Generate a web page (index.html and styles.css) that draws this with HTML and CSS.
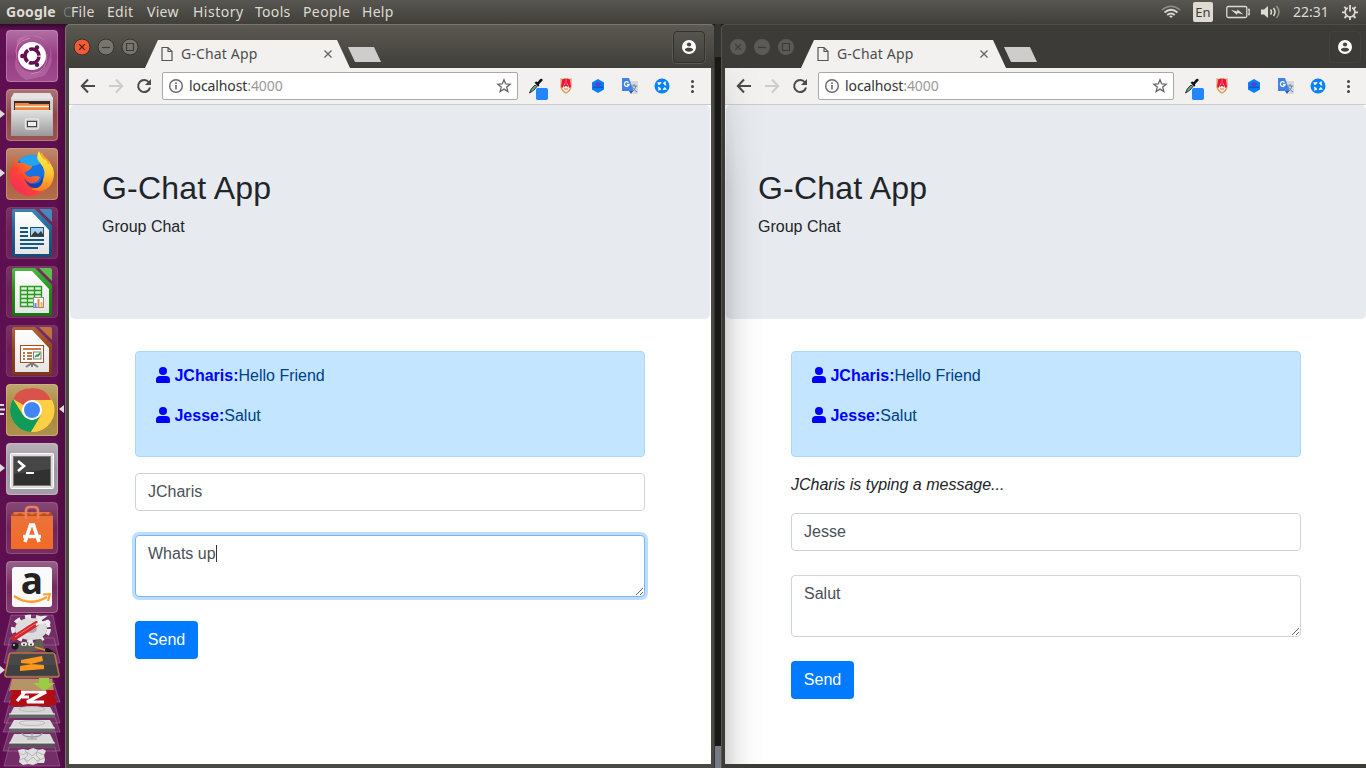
FILE: index.html
```html
<!DOCTYPE html>
<html lang="en">
<head>
<meta charset="utf-8">
<title>G-Chat App</title>
<link rel="stylesheet" href="styles.css">
</head>
<body>
<svg class="defs" width="0" height="0">
  <defs>
    <linearGradient id="gloss" x1="0" y1="0" x2="0" y2="1"><stop offset="0" stop-color="#fff" stop-opacity=".32"/><stop offset=".5" stop-color="#fff" stop-opacity=".08"/><stop offset="1" stop-color="#fff" stop-opacity=".16"/></linearGradient>
    <linearGradient id="metal" x1="0" y1="0" x2="0" y2="1"><stop offset="0" stop-color="#e2e2e2"/><stop offset="1" stop-color="#9a9a9a"/></linearGradient>
    <linearGradient id="orange" x1="0" y1="0" x2="0" y2="1"><stop offset="0" stop-color="#e8743c"/><stop offset="1" stop-color="#f36b25"/></linearGradient>
    <linearGradient id="fox" x1="0" y1="1" x2="1" y2="0"><stop offset="0" stop-color="#f0246f"/><stop offset=".35" stop-color="#ff4037"/><stop offset=".65" stop-color="#ff8a20"/><stop offset="1" stop-color="#ffc52e"/></linearGradient>
    <linearGradient id="tail" x1="0" y1="0" x2="0" y2="1"><stop offset="0" stop-color="#fff04a"/><stop offset=".55" stop-color="#ffc833"/><stop offset="1" stop-color="#ff7a26"/></linearGradient>
    <linearGradient id="paper" x1="0" y1="0" x2="0" y2="1"><stop offset="0" stop-color="#fff"/><stop offset="1" stop-color="#e4e4e4"/></linearGradient>
    <linearGradient id="writer" x1="0" y1="0" x2="0" y2="1"><stop offset="0" stop-color="#2577ab"/><stop offset="1" stop-color="#07426f"/></linearGradient>
    <linearGradient id="calc" x1="0" y1="0" x2="0" y2="1"><stop offset="0" stop-color="#3cae30"/><stop offset=".5" stop-color="#168b0d"/><stop offset="1" stop-color="#0c6b05"/></linearGradient>
    <linearGradient id="impress" x1="0" y1="0" x2="0" y2="1"><stop offset="0" stop-color="#a75023"/><stop offset="1" stop-color="#782b08"/></linearGradient>
    <symbol id="tile" viewBox="0 0 52 52"><rect x=".5" y=".5" width="51" height="51" rx="3.5" fill="url(#gloss)" stroke="#fff" stroke-opacity=".3"/></symbol>
    <symbol id="arrow" viewBox="0 0 6 8"><path d="M0 0 5 4 0 8z" fill="#ddd"/></symbol>
    <symbol id="back" viewBox="0 0 16 16"><path d="M15 8H2M8 1.500 1.800 8 8 14.500" fill="none" stroke="currentColor" stroke-width="2"/></symbol>
    <symbol id="fwd" viewBox="0 0 16 16"><path d="M1 8h13M8 1.500 14.200 8 8 14.500" fill="none" stroke="currentColor" stroke-width="2"/></symbol>
    <symbol id="reload" viewBox="0 0 16 16"><path d="M13 4.500A6 6 0 1 0 14 9.500" fill="none" stroke="currentColor" stroke-width="2"/><path d="M15 1v6H9z" fill="currentColor"/></symbol>
    <symbol id="info" viewBox="0 0 16 16"><circle cx="8" cy="8" r="6.300" fill="none" stroke="#666" stroke-width="1.400"/><path d="M8 7v4.500M8 4.300v1.600" stroke="#666" stroke-width="1.600"/></symbol>
    <symbol id="star" viewBox="0 0 16 16"><path d="m8 1.700 1.700 4.200 4.500.3-3.500 2.900 1.200 4.400L8 11.100l-3.900 2.400 1.200-4.400-3.500-2.900 4.500-.3z" fill="none" stroke="#666" stroke-width="1.300"/></symbol>
    <symbol id="file" viewBox="0 0 12 16"><path d="M1 1.500h6l4 4v9H1zM7 1.500v4h4" fill="none" stroke="#555" stroke-width="1.200"/></symbol>
    <symbol id="avatar" viewBox="0 0 14 14"><circle cx="7" cy="7" r="7" fill="#fff"/><circle cx="7" cy="4.500" r="2.100" fill="#45443f"/><path d="M2.800 9.800c.8-2.600 7.600-2.600 8.400 0-1.300 2.500-7.100 2.500-8.400 0z" fill="#45443f"/></symbol>
    <symbol id="ext" viewBox="0 0 152 24">
      <path d="M1.500 16q1-4.500 5.500-8l2 1.500q-3 4.500-7.500 6.500z" fill="#64a283" stroke="#2c3b35" stroke-width="1"/><path d="m6.500 5.500 2-1 1 .7L12 2.200q2-1 2.600.4.200 1.400-1.200 2.200L11 7.200l.3 1.300-1.200 1.200z" fill="#111"/>
      <rect x="8" y="11" width="12" height="12" rx="1.800" fill="#2486fc"/>
      <path d="M38 1.500q2.500 1.500 5 .5v8.500q-1 3.500-5 5.500-4-2-5-5.500V2q2.500 1 5-.5z" fill="#fbeee0" stroke="#dca257" stroke-width="1.200"/><path d="M34 2.500 37 1.500V6L34.500 11 33 10zM42 2.500 39 1.500V6l2.500 5 1.500-1z" fill="#f1123c"/><path d="M38 2v7M36 9.500l2-2 2 2" fill="none" stroke="#f1123c" stroke-width="1.600"/><path d="M36 12h4" stroke="#cf7d68"/>
      <path d="m70 2 6 3.400v7.200L70 16l-6-3.400V5.400z" fill="#087cff"/><path d="m66 7.500 4-2.500 4 2.500-4 2z" fill="#5b3fc4"/><path d="M65 10.300h10" stroke="#075db8" stroke-width="1.500"/>
      <path d="M102 4h8v13h-5z" fill="#d5d9dc"/><path d="M94 1h7l4.500 13H94z" fill="#3f83e8"/><path d="M103 9h6M106 7v2M108 9q-1 4-4 6M104 10q2 3 5 5" stroke="#67819b" fill="none"/><path d="M101 14h4l-2 3z" fill="#2856b5"/><path d="M100.500 5.500a2.300 2.300 0 1 0 .5 2h-2" stroke="#fff" stroke-width="1.300" fill="none"/>
      <circle cx="134" cy="9" r="7.500" fill="#0683fa"/><circle cx="134" cy="9" r="3.600" fill="none" stroke="#fff" stroke-width="1.700" stroke-dasharray="3.600 2.050" stroke-dashoffset="1.800" transform="rotate(45 134 9)"/><path d="m129.500 5.500 2.500 1.300M137.500 4.500l-1.300 2.500M138.500 12.500l-2.500-1.300M130.500 13.500l1.300-2.500" stroke="#fff" stroke-width="1.400"/>
    </symbol>
    <symbol id="user" viewBox="0 0 14 16"><circle cx="7" cy="4" r="4" fill="#00f"/><path d="M4 9h6a4 4 0 0 1 4 4v1.700a1.300 1.300 0 0 1-1.300 1.300H1.300A1.300 1.300 0 0 1 0 14.700V13a4 4 0 0 1 4-4z" fill="#00f"/></symbol>
  </defs>
</svg>

<header class="panel">
  <strong class="app-name">Google</strong><span class="app-fade">C</span>
  <nav class="menu"><span>File</span><span>Edit</span><span>View</span><span>History</span><span>Tools</span><span>People</span><span>Help</span></nav>
  <div class="indicators">
    <svg class="wifi" width="20" height="14" viewBox="0 0 20 14" fill="none" stroke="#dfdbd2"><path d="M.8 5Q10-2.500 19.200 5" stroke-opacity=".45" stroke-width="1.500"/><path d="M3.500 7.500Q10 2 16.500 7.500M6.200 10Q10 7 13.800 10" stroke-width="1.700"/><path d="m8 11 2 2 2-2q-2-1.200-4 0z" fill="#dfdbd2" stroke="none"/></svg>
    <span class="lang">En</span>
    <svg class="battery" width="24" height="14" viewBox="0 0 24 14" fill="none" stroke="#dfdbd2" stroke-width="1.300"><rect x=".8" y="1.500" width="20" height="11" rx="1.500"/><path d="M22 4.500h1.200v5H22"/><path d="m5 4.800 6 1.700.5-2 6 5-6-1.500-.5 2z" fill="#dfdbd2" stroke="none"/></svg>
    <svg class="volume" width="20" height="14" viewBox="0 0 20 14" fill="none" stroke="#dfdbd2" stroke-width="1.500"><path d="M0 4.500h3L7 1v12L3 9.500H0z" fill="#dfdbd2" stroke="none"/><path d="M9.500 4.500q2 2.500 0 5M12.500 3q3 4 0 8"/><path d="M15.500 1q5 6 0 12" stroke-opacity=".5"/></svg>
    <time class="clock">22:31</time>
    <svg class="gear" width="16" height="16" viewBox="0 0 16 16" fill="none" stroke="#dfdbd2"><path d="M5.800 3.700a4.900 4.900 0 1 0 4.400 0" stroke-width="1.700"/><path d="M8 1v6.500M2.300 2.800l2 2M13.700 2.800l-2 2M0 8.300h3M13 8.300h3M2.500 14l2-2M13.500 14l-2-2M8 13v3" stroke-width="1.800"/></svg>
  </div>
</header>

<main class="desktop">
  <ul class="launcher">
    <li><svg viewBox="0 0 64 59"><rect x="6" width="52" height="52" rx="4" fill="#8d2a78"/><path d="M17 26C14 8 34-2 47 12Q53 20 48 32 44 44 30 42 18 40 17 26zM17 26Q10 40 26 50L44 46Q58 30 47 12 30 0 17 10z" fill="#d58bc2" opacity=".3"/><path d="M17 28Q12 12 30 8M47 24q1 18-16 20" fill="none" stroke="#e0a5d2" opacity=".5"/><use href="#tile" x="6" width="52" height="52"/><circle cx="32" cy="26" r="14" fill="#fff"/><circle cx="32" cy="26" r="7" fill="none" stroke="#62104f" stroke-width="3.600" stroke-dasharray="13.300 1.360" stroke-dashoffset="-.7"/><circle cx="22.300" cy="26" r="2.200" fill="#62104f"/><circle cx="37" cy="17.500" r="2.200" fill="#62104f"/><circle cx="37" cy="34.700" r="2.200" fill="#62104f"/></svg></li>
    <li><svg viewBox="0 0 64 59"><rect x="6" width="52" height="52" rx="4" fill="#873434"/><use href="#tile" x="6" width="52" height="52"/><path d="M14 4h36l3 6v36H11V10z" fill="url(#metal)"/><path d="M11 10h42v-1L50 4H14l-3 5z" fill="#e4e4e4"/><path d="M14 12h36v10H14z" fill="#3c2924"/><path d="M15 14h13l2 1h19v6H15z" fill="#ed873f"/><path d="M15 17.500h34" stroke="#fdeedd" stroke-width="1.500"/><path d="M12 21h40l1 26H11z" fill="url(#metal)"/><rect x="25.500" y="30" width="13" height="10" rx="2" fill="#b5b5b5" stroke="#e6e6e6" stroke-width="1.500"/><rect x="27.500" y="32.500" width="9" height="5" fill="#eee" stroke="#444"/><use href="#arrow" y="21" width="6" height="8"/></svg></li>
    <li><svg viewBox="0 0 64 59"><rect x="6" width="52" height="52" rx="4" fill="#a4522a"/><use href="#tile" x="6" width="52" height="52"/><circle cx="32" cy="25" r="18" fill="#1673e4"/><path d="M19 12q9-8 19-4l2 8-14 4z" fill="#23a4ef"/><path d="M15 7q-1 4 3 8 6-1 9 2l5 1q-1 4-7 6 0 4 5 5 6-2 10 0-2 6-9 6 8 4 14-3 5-9-2-18-3-5-2-10l3 4 6 6q6 12 0 22-8 12-21 12Q13 46 10 31q-1-11 4-15-1-5 1-9z" fill="url(#fox)"/><path d="M39 3q-4 7 1 12 8 8 2 19-3 6-11 7 12 5 19-3 6-9 3-18-2-4-4-5l-1 2q0-3-3-6l-1 1q-3-3-5-9z" fill="url(#tail)"/><path d="M24 30q5 8 14 5 4-2 4-8 3 10-5 13-9 1-13-10z" fill="#1540b2"/><use href="#arrow" y="21" width="6" height="8"/></svg></li>
    <li><svg viewBox="0 0 64 59"><rect x="6" width="52" height="52" rx="4" fill="#681951"/><path d="M14 2h21l17 17v29q0 2-2 2H14q-2 0-2-2V4q0-2 2-2z" fill="url(#writer)"/><path d="M39 2h11q2 0 2 2v11z" fill="#2f7fb7"/><path d="M15 5h17l17 18v24H15z" fill="url(#paper)"/><path d="M20 21h8M20 25h8M20 29h8M20 33h24M20 37h24M20 41h18" stroke="#0b527f" stroke-width="1.900"/><rect x="30.500" y="20.500" width="13" height="9" fill="#9fd3ef" stroke="#174b74"/><path d="m31 29 4-5 3 3 3-3 3 5z" fill="#333"/><use href="#tile" x="6" width="52" height="52" opacity=".35"/></svg></li>
    <li><svg viewBox="0 0 64 59"><rect x="6" width="52" height="52" rx="4" fill="#681951"/><path d="M14 2h21l17 17v29q0 2-2 2H14q-2 0-2-2V4q0-2 2-2z" fill="url(#calc)"/><path d="M39 2h11q2 0 2 2v11z" fill="#4cb83f"/><path d="M15 5h17l17 18v24H15z" fill="url(#paper)"/><path d="M20.500 20.500h21V40.500h-21zM20 24.500h21M20 28.500h21M20 32.500h21M20 36.500h21M27.500 20v21M34.500 20v21" fill="#d9f3d3" stroke="#25941c" stroke-width="1.400"/><rect x="33.500" y="31.500" width="10" height="10" fill="#fff" stroke="#888"/><path d="M35.500 41v-4" stroke="#38f" stroke-width="2"/><path d="M38.500 41v-8" stroke="#e74" stroke-width="2"/><path d="M41.500 41v-5" stroke="#fa2" stroke-width="2"/><use href="#tile" x="6" width="52" height="52" opacity=".35"/></svg></li>
    <li><svg viewBox="0 0 64 59"><rect x="6" width="52" height="52" rx="4" fill="#681951"/><path d="M14 2h21l17 17v29q0 2-2 2H14q-2 0-2-2V4q0-2 2-2z" fill="url(#impress)"/><path d="M39 2h11q2 0 2 2v11z" fill="#b8652f"/><path d="M15 5h17l17 18v24H15z" fill="url(#paper)"/><rect x="20.500" y="20.500" width="23" height="17" fill="#fff" stroke="#a34413"/><path d="M23 24h18" stroke="#d6733d" stroke-width="2"/><path d="M23 28h2M23 31h2M23 34h2M27 28h5M27 31h5M27 34h5" stroke="#a34413" stroke-width="1.600"/><rect x="33.500" y="27" width="7.500" height="7" fill="#fff" stroke="#777"/><path d="m35 32 2-2 1 1 2-3" fill="none" stroke="#269326" stroke-width="1.500"/><path d="m26 42 6-4 6 4M32 38v4" fill="none" stroke="#777" stroke-width="2"/><use href="#tile" x="6" width="52" height="52" opacity=".35"/></svg></li>
    <li><svg viewBox="0 0 64 59"><rect x="6" width="52" height="52" rx="4" fill="#a17d2b"/><use href="#tile" x="6" width="52" height="52"/><circle cx="32" cy="26" r="22" fill="#ffcf43"/><path d="M32 26 13 15Q18 4 32 4t19 12z" fill="#d9534a"/><path d="M13 15A22 22 0 0 0 31 48l10-17q-9 9-18 0z" fill="#109b59"/><path d="M32 16h20a22 22 0 0 1-21 32l11-17z" fill="#ffcf43"/><circle cx="32" cy="26" r="10" fill="#fff"/><circle cx="32" cy="26" r="8" fill="#4285f4"/><path d="M0 21h4M0 25.500h5M0 30h4" stroke="#ddd" stroke-width="2"/><path d="m64 21-5 4 5 4z" fill="#ddd"/></svg></li>
    <li><svg viewBox="0 0 64 59"><rect x="6" width="52" height="52" rx="4" fill="#968b96"/><use href="#tile" x="6" width="52" height="52"/><rect x="10.500" y="10.500" width="43" height="35" rx="1" fill="#ddd" stroke="#fff"/><rect x="13.500" y="13.500" width="37" height="29" fill="#303130" stroke="#777"/><path d="M14 14h36v12L14 31z" fill="#fff" opacity=".1"/><path d="m18 18 6 5-6 5" fill="none" stroke="#fff" stroke-width="2.600"/><path d="M26 30h8" stroke="#fff" stroke-width="2"/><use href="#arrow" y="21" width="6" height="8"/></svg></li>
    <li><svg viewBox="0 0 64 59"><rect x="6" width="52" height="52" rx="4" fill="#681951"/><use href="#tile" x="6" width="52" height="52" opacity=".65"/><path d="m11 14 3-4h36l3 4v33H11z" fill="url(#orange)"/><path d="M11 14h42l-3-4-2 3-4-2-4 2-4-2-4 2-4-2-4 2-4-2-4 2-4-2z" fill="#b34d2a"/><path d="M26 17V9q0-4 4-4h4q4 0 4 4v8" fill="none" stroke="#ec8058" stroke-width="2.600"/><path d="m25 40 5.500-17h3L39 40" fill="none" stroke="#fff" stroke-width="3.600"/><path d="M23 34.500h18" stroke="#fff" stroke-width="3.500"/></svg></li>
    <li><svg viewBox="0 0 64 59"><rect x="6" width="52" height="52" rx="4" fill="#681951"/><use href="#tile" x="6" width="52" height="52"/><rect x="12" y="6" width="40" height="40" rx="3" fill="#fafafa"/><text class="amazon-a" x="32" y="33" text-anchor="middle">a</text><path d="M14 35q16 11 33 1" fill="none" stroke="#f9a12c" stroke-width="2.400"/><path d="m43 33.500 7-.5-2 7" fill="none" stroke="#f9a12c" stroke-width="2"/></svg></li>
    <li class="stack"><svg viewBox="0 614 64 154">
      <g fill="#8f5584" fill-opacity=".45" stroke="#b486aa" stroke-opacity=".55" stroke-width=".8"><path d="M11 615h42l6 30H4zM10 638h44l6 25H4zM12 678h40l8 24H4zM10 701h44l6 22H4zM9 717h46l5 15H3zM9 731h46l5 20H3zM9 747h46l5 19H4z"/></g>
      <ellipse cx="31" cy="629" rx="16" ry="11" fill="#dcdcdc"/><ellipse cx="31" cy="629" rx="18" ry="12.500" fill="none" stroke="#e8e8e8" stroke-width="4" stroke-dasharray="6 5"/><ellipse cx="31" cy="629" rx="6" ry="4" fill="#b4a4b0"/>
      <path d="M14 638 36 624" stroke="#d3262c" stroke-width="5.500" stroke-linecap="round"/><path d="M15 637 35 624" stroke="#f07575" stroke-width="1"/><path d="m36 625 6-4M47 626q4-3 1-5l-6 2-2-3 4-3q-6 0-5 5" stroke="#eee" stroke-width="2.500" fill="none"/>
      <path d="M17 648q1-7 9-6 6 2 10-1 5-5 7 1l1 7-14 3H16z" fill="#635f56"/><circle cx="15" cy="646" r="3.500" fill="#191b1d"/><circle cx="14" cy="645" r="1" fill="#ddd"/><ellipse cx="24" cy="644" rx="3" ry="2" fill="#eee"/><ellipse cx="31" cy="644" rx="3" ry="2" fill="#eee"/><circle cx="24" cy="644.500" r="1" fill="#222"/><circle cx="31" cy="644.500" r="1" fill="#222"/><path d="m35 647 13 4" stroke="#e98d28" stroke-width="1.800"/><path d="m47 650 7 4" stroke="#15181c" stroke-width="4" stroke-linecap="round"/>
      <path d="M11 653h42q1.500 0 2 2l4 20q0 2-2 2H7q-2 0-2-2l4-20q.5-2 2-2z" fill="#484848" stroke="#bd7647" stroke-width="1.600"/><path d="M8 665h48l3 10H5z" fill="#222" opacity=".2"/><path d="m21 660 21-4 1 5-12 3 13 1v4l-24 2v-5l12-2-11-1z" fill="#ff971d"/><use href="#arrow" y="666" width="6" height="8"/>
      <path d="M12 679h40l2 12H9z" fill="#b59565"/><path d="M10 690h44l2 4-2 3 3 3-2 6-4-1-3 2-4-2-4 2-4-2-4 2-4-2-4 2-4-2-4 2-4-2-4 1 3-5-1-4 3-3z" fill="#b20c14"/><path d="M21 692h13M25 692l-8 9M22 697h7M33 692h13L27 702h17" fill="none" stroke="#fff" stroke-width="3.200"/><path d="M39 678h10v5h6l-11 8-11-8h6z" fill="#9ccc45"/>
      <path d="M14 707h36l5 9H9z" fill="#d5d5d5"/><path d="M9 714h46v4H9z" fill="#666"/><path d="M9 714h46" stroke="#eee"/><ellipse cx="32" cy="709" rx="13" ry="2.500" fill="none" stroke="#bbb"/><path d="M14 720h36l5 9H9z" fill="#ddd"/><path d="M9 728h46v4H9z" fill="#666"/><path d="M9 728h46" stroke="#eee"/><ellipse cx="32" cy="723" rx="13" ry="2.500" fill="none" stroke="#bbb"/><path d="M14 734h36l5 10H9z" fill="#d9d9d9"/><path d="M9 743h46v4H9z" fill="#555"/><path d="M9 743h46" stroke="#eee"/><path d="M32 733v6M22 733q1 4 10 4t10-4M27 739h10" fill="none" stroke="#999" stroke-width="1.200"/>
      <path d="m18 750 5-1 5 1 5-2 5 2 5-1 3 2-2 4 1 5-1 3-6 0-5 2-5-1-5 1-4-3 1-5z" fill="#e0e0e0"/><path d="m19 753 4 2 4-3 5 4 5-4 7 3M20 760l4-2 4 3 5-4 4 4 7-3M25 750l3 5-4 4 4 4M38 749l-2 6 4 4-4 5" fill="none" stroke="#b5b5b5"/>
    </svg></li>
  </ul>

  <section class="window">
    <div class="titlebar">
      <div class="controls">
        <svg width="20" height="20" viewBox="0 0 20 20"><circle cx="10" cy="10" r="8" fill="#f35b32" stroke="#33322e"/><path d="m7.200 7.200 5.600 5.600m0-5.600-5.600 5.600" stroke="#4a2015" stroke-width="1.200"/></svg>
        <svg width="20" height="20" viewBox="0 0 20 20"><circle cx="10" cy="10" r="8" fill="#777570" stroke="#33322e"/><path d="M6 10.500h8" stroke="#3c3b37" stroke-width="1.200"/></svg>
        <svg width="20" height="20" viewBox="0 0 20 20"><circle cx="10" cy="10" r="8" fill="#777570" stroke="#33322e"/><path d="M6.500 6.500h7v7h-7z" fill="none" stroke="#3c3b37" stroke-width="1.200"/></svg>
      </div>
      <div class="tab"><svg width="12" height="16"><use href="#file"/></svg><span>G-Chat App</span><svg class="close" width="8" height="8" viewBox="0 0 8 8"><path d="m.5.5 7 7m0-7-7 7" stroke="#666" stroke-width="1.400"/></svg></div>
      <div class="newtab"></div>
      <div class="profile"><svg width="14" height="14"><use href="#avatar"/></svg></div>
    </div>
    <div class="view">
      <div class="toolbar">
        <svg class="nav" width="16" height="16"><use href="#back"/></svg><svg class="nav dim" width="16" height="16"><use href="#fwd"/></svg><svg class="nav" width="16" height="16"><use href="#reload"/></svg>
        <div class="address"><svg width="16" height="16"><use href="#info"/></svg><span class="host">localhost</span><span class="port">:4000</span><svg class="star" width="16" height="16"><use href="#star"/></svg></div>
        <svg class="ext" width="152" height="24"><use href="#ext"/></svg>
        <div class="dots"><i></i><i></i><i></i></div>
      </div>
      <div class="page">
        <div class="jumbotron"><h1>G-Chat App</h1><p>Group Chat</p></div>
        <div class="container">
          <div class="messages"><p><svg width="14" height="16"><use href="#user"/></svg> <strong>JCharis:</strong>Hello Friend</p><p><svg width="14" height="16"><use href="#user"/></svg> <strong>Jesse:</strong>Salut</p></div>
          <input class="field" type="text" value="JCharis">
          <div class="editor"><textarea class="field focused" rows="2">Whats up</textarea><span class="caret"></span></div>
          <button class="send">Send</button>
        </div>
      </div>
    </div>
  </section>

  <div class="gap"></div>

  <section class="window inactive">
    <div class="titlebar">
      <div class="controls">
        <svg width="20" height="20" viewBox="0 0 20 20"><circle cx="10" cy="10" r="8" fill="#5c5a56"/><path d="m7.200 7.200 5.600 5.600m0-5.600-5.600 5.600" stroke="#3c3b37" stroke-width="1.200"/></svg>
        <svg width="20" height="20" viewBox="0 0 20 20"><circle cx="10" cy="10" r="8" fill="#5c5a56"/><path d="M6 10.500h8" stroke="#3c3b37" stroke-width="1.200"/></svg>
        <svg width="20" height="20" viewBox="0 0 20 20"><circle cx="10" cy="10" r="8" fill="#5c5a56"/><path d="M6.500 6.500h7v7h-7z" fill="none" stroke="#3c3b37" stroke-width="1.200"/></svg>
      </div>
      <div class="tab"><svg width="12" height="16"><use href="#file"/></svg><span>G-Chat App</span><svg class="close" width="8" height="8" viewBox="0 0 8 8"><path d="m.5.5 7 7m0-7-7 7" stroke="#666" stroke-width="1.400"/></svg></div>
      <div class="newtab"></div>
      <div class="profile"><svg width="14" height="14"><use href="#avatar"/></svg></div>
    </div>
    <div class="view">
      <div class="toolbar">
        <svg class="nav" width="16" height="16"><use href="#back"/></svg><svg class="nav dim" width="16" height="16"><use href="#fwd"/></svg><svg class="nav" width="16" height="16"><use href="#reload"/></svg>
        <div class="address"><svg width="16" height="16"><use href="#info"/></svg><span class="host">localhost</span><span class="port">:4000</span><svg class="star" width="16" height="16"><use href="#star"/></svg></div>
        <svg class="ext" width="152" height="24"><use href="#ext"/></svg>
        <div class="dots"><i></i><i></i><i></i></div>
      </div>
      <div class="page">
        <div class="jumbotron"><h1>G-Chat App</h1><p>Group Chat</p></div>
        <div class="container">
          <div class="messages"><p><svg width="14" height="16"><use href="#user"/></svg> <strong>JCharis:</strong>Hello Friend</p><p><svg width="14" height="16"><use href="#user"/></svg> <strong>Jesse:</strong>Salut</p></div>
          <p class="feedback"><em>JCharis is typing a message...</em></p>
          <input class="field" type="text" value="Jesse">
          <div class="editor"><textarea class="field" rows="2">Salut</textarea></div>
          <button class="send">Send</button>
        </div>
      </div>
    </div>
  </section>
</main>
</body>
</html>
```

FILE: styles.css
```css
* { box-sizing: border-box; }
body { margin: 0; width: 1366px; height: 768px; overflow: hidden; background: #1b1b19; font: 16px/1.5 "Liberation Sans", Arial, sans-serif; color: #212529; }
svg { flex: none; }
.defs { display: block; position: absolute; }

.panel { display: flex; align-items: center; height: 24px; padding-left: 6px; background: linear-gradient(#575650, #403f3a); color: #dfdbd2; font: 14px/24px "Noto Sans", sans-serif; white-space: nowrap; }
.app-name { width: 57px; font-size: 14px; letter-spacing: .1px; }
.app-fade { width: 8px; overflow: hidden; opacity: .3; }
.menu { display: flex; letter-spacing: .3px; }
.menu span { width: 36px; }
.menu span:nth-child(2) { width: 40px; }
.menu span:nth-child(3) { width: 46px; }
.menu span:nth-child(4) { width: 62px; letter-spacing: .5px; }
.menu span:nth-child(5) { width: 48px; }
.menu span:nth-child(6) { width: 59px; letter-spacing: .4px; }
.indicators { display: flex; align-items: center; margin-left: auto; padding-right: 8px; }
.lang { width: 20px; height: 20px; margin: 0 13px 0 12px; border-radius: 2px; background: #dfdbd2; color: #3c3b37; font-size: 13px; line-height: 20px; text-align: center; }
.volume { margin: 0 12px 0 11px; }
.clock { width: 38px; margin-right: 11px; }

.desktop { display: flex; height: 744px; }
.launcher { flex: none; width: 65px; height: 744px; margin: 0; padding: 6px 0 0; overflow: hidden; list-style: none; background: linear-gradient(#35092e, transparent 6px), linear-gradient(90deg, #5e0f50 0 55px, #4d0b40); }
.launcher li { height: 59px; }
.launcher svg { display: block; width: 64px; height: 59px; overflow: visible; }
.launcher .stack { height: 154px; margin-top: -6px; }
.launcher .stack svg { height: 154px; }
.amazon-a { font: bold 37px "Open Sans", sans-serif; fill: #222; }

.window { display: flex; flex-direction: column; flex: none; width: 650px; height: 744px; padding: 0 4px 4px; background: #4a4943; border-radius: 5px 5px 0 0; box-shadow: inset 1px 1px #77756c, inset -1px 0 #33322e; }
.inactive { background: #3c3b37; box-shadow: inset 1px 1px #55534c; }
.gap { flex: none; width: 6px; height: 744px; background: linear-gradient(#343430 0 33px, #191917 33px 722px, #777b85 722px); }
.titlebar { display: flex; flex: none; height: 44px; margin: 0 -3px; padding-left: 3px; border-top: 1px solid #77756c; border-radius: 5px 5px 0 0; background: linear-gradient(#5b5951, #3f3e39); }
.inactive .titlebar { background: #3c3b37; border-color: #4e4d47; }
.controls { display: flex; gap: 4px; width: 76px; padding: 12px 0 0 3px; }
.tab { display: flex; align-items: center; width: 205px; height: 28px; margin-top: 15px; padding: 0 18px 0 16px; background: #f2f1f0; clip-path: polygon(13px 0, 192px 0, 205px 28px, 0 28px); color: #4d4d4d; font: 14px/28px "Noto Sans", sans-serif; letter-spacing: .15px; white-space: nowrap; }
.tab span { margin-left: 8px; }
.close { margin-left: auto; }
.newtab { width: 33px; height: 15px; margin: 22px 0 0 -2px; background: #cfcdcb; clip-path: polygon(0 0, 26px 0, 33px 15px, 7px 15px); }
.profile { display: flex; align-items: center; justify-content: center; width: 32px; height: 32px; margin: 6px 9px 0 auto; border: 1px solid #33322e; border-radius: 4px; box-shadow: 0 0 0 1px #5a5850; }
.inactive .profile { border-color: #43423d; box-shadow: none; }

.view { position: relative; flex: 1; min-height: 0; background: #fff; }
.inactive .view::after { content: ""; position: absolute; inset: 0 auto 0 0; width: 40px; background: linear-gradient(90deg, rgba(0,0,0,.16), rgba(0,0,0,.065) 12px, rgba(0,0,0,.02) 25px, transparent); -webkit-mask: linear-gradient(rgba(0,0,0,.15), #000 120px); mask: linear-gradient(rgba(0,0,0,.15), #000 120px); pointer-events: none; }
.toolbar { display: flex; align-items: center; height: 37px; padding-left: 11px; background: #f2f1f0; border-bottom: 1px solid #ccc; }
.nav { margin-right: 12px; color: #4a4a4a; }
.dim { color: #ccc; }
.address { display: flex; align-items: center; width: 356px; height: 28px; margin-left: -2px; padding: 0 5px; border: 1px solid #a9a9a9; border-radius: 2px; background: #fff; font: 14px/26px "Noto Sans", sans-serif; letter-spacing: -.1px; }
.host { margin-left: 5px; color: #333; }
.port { color: #999; }
.star { margin-left: auto; }
.ext { margin: 6px 0 0 10px; }
.dots { display: flex; flex-direction: column; gap: 2px; margin-left: 11px; }
.dots i { width: 3px; height: 3px; border-radius: 50%; background: #444; }

.page { padding: 0 1px; }
.jumbotron { height: 214px; padding: 64px 32px; border-radius: 5px; background: #e7ebf0; }
.jumbotron h1 { margin: 0 0 8px; font-size: 32px; font-weight: 400; line-height: 38.4px; letter-spacing: .2px; }
.jumbotron p { margin: 0; }
.container { width: 510px; margin: 32px auto 0; }
.messages { height: 106px; margin-bottom: 16px; padding: 12px 20px; border: 1px solid #a9d8ff; border-radius: 4px; background: #c3e5ff; color: #004085; }
.messages p { margin: 0 0 16px; }
.messages svg { vertical-align: -2px; }
.messages strong { color: #00f; }
.feedback { margin: 0 0 16px; }
.field { display: block; width: 100%; height: 38px; margin: 0 0 24px; padding: 6px 12px; border: 1px solid #ced4da; border-radius: 4px; outline: none; background: #fff; color: #495057; font: inherit; }
.editor { position: relative; }
textarea.field { height: 62px; resize: vertical; overflow: auto; }
.focused { border-color: #70b7fd; box-shadow: 0 0 0 3px #bfdeff; }
.caret { position: absolute; left: 81px; top: 10px; width: 1px; height: 17px; background: #333; }
.send { display: block; width: 63px; height: 38px; padding: 0; border: 0; border-radius: 4px; background: #007bff; color: #fff; font: inherit; }
```
